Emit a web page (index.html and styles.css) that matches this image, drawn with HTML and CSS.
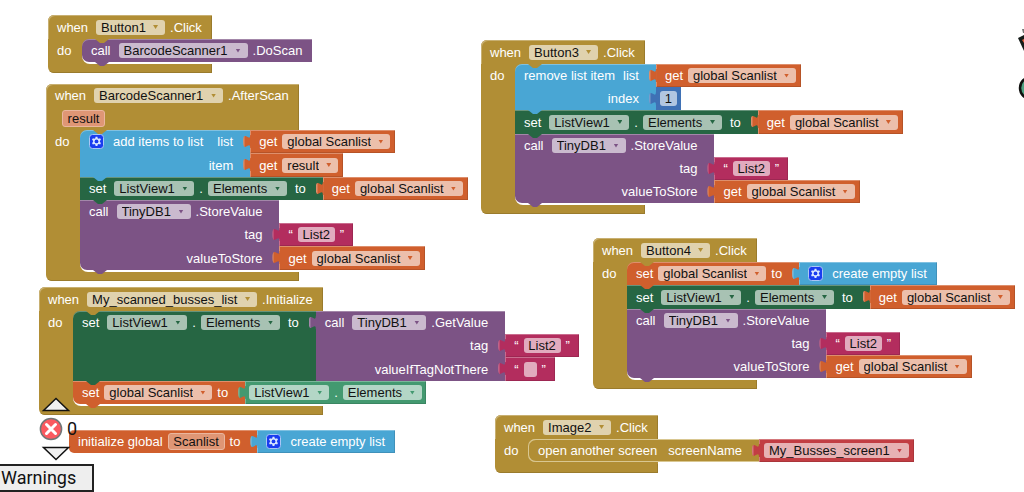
FILE: index.html
```html
<!DOCTYPE html>
<html lang="en">
<head>
<meta charset="utf-8">
<title>Blocks workspace</title>
<link rel="stylesheet" href="styles.css">
</head>
<body>
<svg class="defs" aria-hidden="true">
  <symbol id="gear" viewBox="0 0 15 15">
    <rect x=".5" y=".5" width="14" height="14" rx="3" fill="#1a3df0" stroke="#a9c6f5"/>
    <path d="M6.6 2.8h1.8l.3 1.4 1 .5 1.4-.5.9 1.6-1.1 1v1.2l1.1 1-.9 1.6-1.4-.5-1 .5-.3 1.4H6.6l-.3-1.4-1-.5-1.4.5-.9-1.6 1.1-1V6.8L3 5.800l.9-1.600 1.400.5 1-.5z" fill="#dbe8ff"/>
    <circle cx="7.5" cy="7.400" r="1.900" fill="#1a3df0"/>
  </symbol>
</svg>
<main class="workspace">

  <section class="event at-button1">
    <div class="head"><div class="line"><span>when</span><span class="dd wide"><select aria-label="Component"><option>Button1</option></select></span><span>.Click</span></div></div>
    <div class="body"><span class="do">do</span>
      <div class="slot">
        <div class="stmt purple"><div class="cell end"><span>call</span><span class="dd wide"><select aria-label="Component"><option>BarcodeScanner1</option></select></span><span>.DoScan</span></div></div>
      </div>
    </div>
    <div class="foot"></div>
  </section>

  <section class="event at-scanner">
    <div class="head with-params"><div class="line"><span>when</span><span class="dd wide"><select aria-label="Component"><option>BarcodeScanner1</option></select></span><span>.AfterScan</span></div>
      <div class="params"><input class="name w-result" aria-label="Parameter" value="result"></div></div>
    <div class="body"><span class="do">do</span>
      <div class="slot">
        <div class="stmt blue tall">
          <div class="cell"><button class="gear" aria-label="Edit inputs"><svg><use href="#gear"/></svg></button><span class="after-gear">add items to list</span><span class="input-label">list</span></div>
          <div class="value orange"><span>get</span><span class="dd"><select aria-label="Variable"><option>global Scanlist</option></select></span></div>
          <div class="cell">item</div>
          <div class="value orange"><span>get</span><span class="dd"><select aria-label="Variable"><option>result</option></select></span></div>
        </div>
        <div class="stmt green">
          <div class="cell"><span>set</span><span class="dd wide"><select aria-label="Component"><option>ListView1</option></select></span><span>.</span><span class="dd"><select aria-label="Property"><option>Elements</option></select></span><span class="to">to</span></div>
          <div class="value orange"><span>get</span><span class="dd"><select aria-label="Variable"><option>global Scanlist</option></select></span></div>
        </div>
        <div class="stmt purple tall">
          <div class="cell"><span>call</span><span class="dd wide"><select aria-label="Component"><option>TinyDB1</option></select></span><span>.StoreValue</span></div>
          <div></div>
          <div class="cell">tag</div>
          <div class="value pink"><span>“</span><input class="w-list" aria-label="Text" value="List2"><span>”</span></div>
          <div class="cell">valueToStore</div>
          <div class="value orange"><span>get</span><span class="dd"><select aria-label="Variable"><option>global Scanlist</option></select></span></div>
        </div>
      </div>
    </div>
    <div class="foot"></div>
  </section>

  <section class="event at-screen">
    <div class="head"><div class="line"><span>when</span><span class="dd wide"><select aria-label="Component"><option>My_scanned_busses_list</option></select></span><span>.Initialize</span></div></div>
    <div class="body"><span class="do">do</span>
      <div class="slot">
        <div class="stmt green">
          <div class="cell"><span>set</span><span class="dd wide"><select aria-label="Component"><option>ListView1</option></select></span><span>.</span><span class="dd"><select aria-label="Property"><option>Elements</option></select></span><span class="to">to</span></div>
          <div class="value call purple">
            <div class="stmt nested tall">
              <div class="cell"><span>call</span><span class="dd wide"><select aria-label="Component"><option>TinyDB1</option></select></span><span>.GetValue</span></div>
              <div></div>
              <div class="cell">tag</div>
              <div class="value pink"><span>“</span><input class="w-list" aria-label="Text" value="List2"><span>”</span></div>
              <div class="cell">valueIfTagNotThere</div>
              <div class="value pink"><span>“</span><input class="w-empty" aria-label="Text" value=""><span>”</span></div>
            </div>
          </div>
        </div>
        <div class="stmt orange">
          <div class="cell"><span>set</span><span class="dd"><select aria-label="Variable"><option>global Scanlist</option></select></span><span>to</span></div>
          <div class="value mint"><span class="dd"><select aria-label="Component"><option>ListView1</option></select></span><span>.</span><span class="dd"><select aria-label="Property"><option>Elements</option></select></span></div>
        </div>
      </div>
    </div>
    <div class="foot"></div>
  </section>

  <section class="global at-global">
    <div class="stmt orange lone">
      <div class="cell"><span>initialize global</span><input class="name w-scanlist" aria-label="Variable name" value="Scanlist"><span>to</span></div>
      <div class="value blue"><button class="gear" aria-label="Edit inputs"><svg><use href="#gear"/></svg></button><span class="after-gear">create empty list</span></div>
    </div>
  </section>

  <section class="event at-button3">
    <div class="head"><div class="line"><span>when</span><span class="dd wide"><select aria-label="Component"><option>Button3</option></select></span><span>.Click</span></div></div>
    <div class="body"><span class="do">do</span>
      <div class="slot">
        <div class="stmt blue">
          <div class="cell"><span>remove list item</span><span class="to">list</span></div>
          <div class="value orange"><span>get</span><span class="dd"><select aria-label="Variable"><option>global Scanlist</option></select></span></div>
          <div class="cell">index</div>
          <div class="value math"><input class="w-digit" aria-label="Number" value="1"></div>
        </div>
        <div class="stmt green tall">
          <div class="cell"><span>set</span><span class="dd wide"><select aria-label="Component"><option>ListView1</option></select></span><span>.</span><span class="dd"><select aria-label="Property"><option>Elements</option></select></span><span class="to">to</span></div>
          <div class="value orange"><span>get</span><span class="dd"><select aria-label="Variable"><option>global Scanlist</option></select></span></div>
        </div>
        <div class="stmt purple">
          <div class="cell"><span>call</span><span class="dd wide"><select aria-label="Component"><option>TinyDB1</option></select></span><span>.StoreValue</span></div>
          <div></div>
          <div class="cell">tag</div>
          <div class="value pink"><span>“</span><input class="w-list" aria-label="Text" value="List2"><span>”</span></div>
          <div class="cell">valueToStore</div>
          <div class="value orange"><span>get</span><span class="dd"><select aria-label="Variable"><option>global Scanlist</option></select></span></div>
        </div>
      </div>
    </div>
    <div class="foot"></div>
  </section>

  <section class="event at-button4">
    <div class="head"><div class="line"><span>when</span><span class="dd wide"><select aria-label="Component"><option>Button4</option></select></span><span>.Click</span></div></div>
    <div class="body"><span class="do">do</span>
      <div class="slot">
        <div class="stmt orange">
          <div class="cell"><span>set</span><span class="dd"><select aria-label="Variable"><option>global Scanlist</option></select></span><span>to</span></div>
          <div class="value blue"><button class="gear" aria-label="Edit inputs"><svg><use href="#gear"/></svg></button><span class="after-gear">create empty list</span></div>
        </div>
        <div class="stmt green tall">
          <div class="cell"><span>set</span><span class="dd wide"><select aria-label="Component"><option>ListView1</option></select></span><span>.</span><span class="dd"><select aria-label="Property"><option>Elements</option></select></span><span class="to">to</span></div>
          <div class="value orange"><span>get</span><span class="dd"><select aria-label="Variable"><option>global Scanlist</option></select></span></div>
        </div>
        <div class="stmt purple">
          <div class="cell"><span>call</span><span class="dd wide"><select aria-label="Component"><option>TinyDB1</option></select></span><span>.StoreValue</span></div>
          <div></div>
          <div class="cell">tag</div>
          <div class="value pink"><span>“</span><input class="w-list" aria-label="Text" value="List2"><span>”</span></div>
          <div class="cell">valueToStore</div>
          <div class="value orange"><span>get</span><span class="dd"><select aria-label="Variable"><option>global Scanlist</option></select></span></div>
        </div>
      </div>
    </div>
    <div class="foot"></div>
  </section>

  <section class="event at-image2">
    <div class="head"><div class="line"><span>when</span><span class="dd wide"><select aria-label="Component"><option>Image2</option></select></span><span>.Click</span></div></div>
    <div class="body"><span class="do">do</span>
      <div class="slot">
        <div class="stmt gold">
          <div class="cell"><span>open another screen</span><span class="screen-label">screenName</span></div>
          <div class="value red"><span class="dd"><select aria-label="Screen"><option>My_Busses_screen1</option></select></span></div>
        </div>
      </div>
    </div>
    <div class="foot"></div>
  </section>

  <aside class="warnings">
    <div class="status">
      <button class="icon" aria-label="Previous"><svg width="30" height="16" viewBox="0 0 30 16"><path d="M2.500 14.500 15 2.500l12.500 12z" fill="#f0f0f0" stroke="#111" stroke-width="1.500"/></svg></button>
      <div class="count"><svg width="24" height="24" viewBox="0 0 24 24"><circle cx="12" cy="12" r="10.600" fill="#fa5a60" stroke="#6f7777" stroke-width="1.500"/><path d="M7.500 7.500l9 9m0-9l-9 9" stroke="#fff" stroke-width="3" stroke-linecap="round"/></svg><span>0</span></div>
      <button class="icon" aria-label="Next"><svg width="30" height="16" viewBox="0 0 30 16"><path d="M2.500 1.500h25L15 13.500z" fill="#f0f0f0" stroke="#111" stroke-width="1.500"/></svg></button>
    </div>
    <button class="toggle">Warnings</button>
  </aside>

  <svg class="edge" width="6" height="72" viewBox="0 0 6 72" aria-hidden="true">
    <path d="M4 0h2v4H5z" fill="#777"/>
    <path d="M0 9l6-3v16z" fill="#151c1a"/>
    <path d="M4 11l2-1v4z" fill="#e2603c"/>
    <circle cx="13" cy="59" r="11" fill="#4fa383" stroke="#10100f" stroke-width="2.500"/>
  </svg>
</main>
</body>
</html>
```
FILE: styles.css
```css
* { box-sizing: border-box; }

body {
  margin: 0;
  background: #fff;
  overflow: hidden;
  font: 13px/15px "Liberation Sans", Arial, sans-serif;
  color: #fff;
}

.defs { position: absolute; width: 0; height: 0; }

.workspace { position: relative; min-height: 100vh; }

/* Blocks sit freely on the canvas */
.event, .global { position: absolute; white-space: nowrap; }
.at-button1 { left: 48px; top: 15px; }
.at-scanner { left: 46px; top: 84px; }
.at-screen { left: 39px; top: 287px; }
.at-global { left: 69px; top: 430px; }
.at-button3 { left: 481px; top: 40px; }
.at-button4 { left: 593px; top: 238px; }
.at-image2 { left: 495px; top: 415px; }

.gold { --c: #b18e35; }
.purple { --c: #7c5385; }
.blue { --c: #49a6d4; }
.green { --c: #266643; }
.orange { --c: #d05f2d; }
.pink { --c: #b32d5e; }
.math { --c: #3f71b5; }
.mint { --c: #439970; }
.red { --c: #c23d43; }

/* Event block */
.event { --c: #b18e35; display: grid; }
.head {
  padding: 0 10px 0 9px;
  background: var(--c);
  border-radius: 6px 0 0 0;
  box-shadow: inset 1px 1px 0 #c8b072, inset -1px 0 0 #9a7b2c;
}
.line { display: flex; align-items: center; height: 24px; gap: 5px; }
.with-params .line { height: 23px; }
.params { display: flex; align-items: center; height: 23px; padding-left: 7px; }
.body {
  display: flex;
  width: 0;
  min-width: 100%;
  background: linear-gradient(var(--c), var(--c)) no-repeat 0 0 / 44px 100%;
}
.do { flex: none; width: 34px; padding: 4px 0 0 9px; }
.slot {
  flex: none;
  min-width: calc(100% - 34px);
  padding-bottom: 2px;
  background: linear-gradient(#fff, #fff) no-repeat 0 100% / 100% 12px;
  border-radius: 0 0 0 8px;
}
.foot {
  height: 9px;
  background: var(--c);
  border-radius: 0 0 0 6px;
  box-shadow: inset -1px -1px 0 #9a7b2c;
}

/* Statement: label column plus attached values */
.stmt {
  position: relative;
  display: grid;
  grid-template-columns: max-content max-content;
  width: max-content;
}
.cell {
  display: flex;
  justify-content: flex-end;
  align-items: center;
  align-self: stretch;
  gap: 5px;
  min-height: 23px;
  padding: 0 17px 0 9px;
  background: var(--c);
}
.stmt.tall > :nth-last-child(-n+2) { min-height: 24px; }
.cell.end { padding-right: 10px; }
.cell:first-child {
  justify-content: flex-start;
  box-shadow: inset 0 1px 0 rgba(255, 255, 255, .3);
}
.slot > .stmt:first-child > .cell:first-child { border-top-left-radius: 7px; }
.slot > .stmt:last-child > .cell:nth-last-child(-n+2) { border-bottom-left-radius: 7px; }
.cell:has(+ .call) { align-items: flex-start; padding-top: 4px; }

/* Connector tabs */
.slot > .stmt::after, .slot > .stmt:first-child::before {
  content: "";
  position: absolute;
  z-index: 1;
  left: 13px;
  top: 100%;
  width: 14px;
  height: 4px;
  background: var(--c);
  clip-path: polygon(0 0, 100% 0, 9px 100%, 5px 100%);
}
.slot > .stmt:first-child::before { top: 0; background: #b18e35; }

.value {
  position: relative;
  display: flex;
  align-items: center;
  gap: 5px;
  justify-self: start;
  min-height: 23px;
  padding: 0 5px 0 9px;
  background: var(--c);
  box-shadow: inset 1px 1px 0 rgba(255, 255, 255, .3), inset -1px -1px 0 rgba(0, 0, 0, .12);
}
.value::before {
  content: "";
  position: absolute;
  left: -7px;
  top: 5px;
  width: 8px;
  height: 13px;
  background: linear-gradient(90deg, rgba(255, 255, 255, .3) 1px, transparent 2px) var(--c);
  clip-path: path("M8 0H7C7 8 0 -6 0 6.500S7 5 7 13H8Z");
}
.value.blue { padding-right: 10px; }
.value.pink { padding-right: 9px; }
.value.math, .value.mint { padding-left: 4px; padding-right: 4px; }
.value.red { padding-left: 5px; }
.value.call { display: block; padding: 0; background: none; box-shadow: none; }
.value.math { box-shadow: none; }

.lone .cell { border-radius: 5px 0 0 5px; }
.gold > .cell {
  border: 1px solid #d9c791;
  border-width: 1px 0;
  box-shadow: -1px 0 0 #d9c791;
}
.slot > .gold:first-child::before { top: 1px; }
.slot > .gold:first-child { filter: none; }
.slot > .gold::after {
  top: 0;
  height: 5px;
  z-index: 0;
  background: #d9c791;
}
.slot:has(> .gold) { background: none; }
.body:has(.gold) { background: var(--c); }

/* Fields */
.dd { position: relative; display: flex; align-items: center; }
.wide { margin-left: 3px; }
.to { margin-left: 3px; }
.screen-label { margin-left: 6px; }
.input-label { margin-left: 9px; }
select, input {
  height: 15px;
  margin: 0;
  padding: 0 5px;
  border: 0;
  border-radius: 3px;
  outline: 0;
  background: rgba(255, 255, 255, .6);
  color: #111;
  font: inherit;
}
select { appearance: none; padding-right: 19px; }
.dd::after {
  content: "";
  position: absolute;
  right: 7px;
  width: 5px;
  height: 4px;
  background: var(--c);
  clip-path: polygon(0 0, 100% 0, 50% 100%);
  pointer-events: none;
}
input { padding: 0; text-align: center; }
.name {
  height: 17px;
  background: #df9675;
  border: 1px solid #eab69e;
}
.w-list { width: 37px; }
.w-empty { width: 13px; }
.w-digit { width: 17px; }
.w-result { width: 43px; }
.w-scanlist { width: 57px; }

button { border: 0; margin: 0; padding: 0; background: none; font: inherit; color: inherit; }
.gear, .gear svg { display: block; width: 15px; height: 15px; }
.after-gear { margin-left: 4px; }

/* Warning indicator */
.warnings {
  position: absolute;
  left: 0;
  bottom: 0;
  font: 18px/24px Roboto, sans-serif;
  color: #111;
}
.status { padding-left: 39px; }
.icon { display: block; width: 34px; height: 16px; padding: 0 2px; }
.icon svg, .count svg { display: block; }
.count { display: flex; align-items: center; gap: 4px; height: 34px; }
.toggle {
  display: block;
  width: 94px;
  height: 28px;
  margin-top: 2px;
  padding: 0 0 0 1px;
  border: solid #222;
  border-width: 2px 2px 2px 0;
  background: #eee;
  text-align: left;
}

.edge { position: absolute; right: 0; top: 29px; }
```
